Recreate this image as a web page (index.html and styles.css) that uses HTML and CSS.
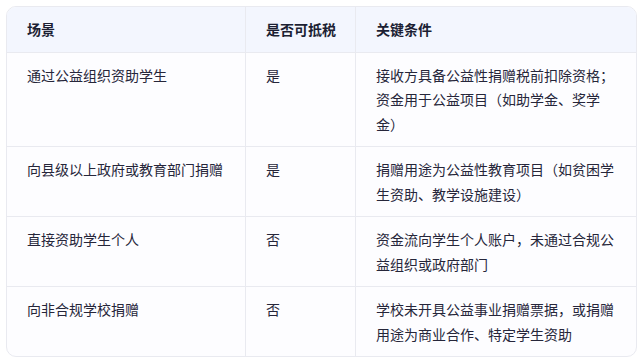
FILE: index.html
```html
<!DOCTYPE html>
<html lang="zh">
<head>
<meta charset="utf-8">
<link rel="stylesheet" href="styles.css">
</head>
<body>
<div class="wrap">
<table class="tbl">
<colgroup><col class="c1"><col class="c2"><col class="c3"></colgroup>
<thead>
<tr><th>场景</th><th>是否可抵税</th><th>关键条件</th></tr>
</thead>
<tbody>
<tr><td>通过公益组织资助学生</td><td>是</td><td>接收方具备公益性捐赠税前扣除资格；资金用于公益项目（如助学金、奖学金）</td></tr>
<tr><td>向县级以上政府或教育部门捐赠</td><td>是</td><td>捐赠用途为公益性教育项目（如贫困学生资助、教学设施建设）</td></tr>
<tr><td>直接资助学生个人</td><td>否</td><td>资金流向学生个人账户，未通过合规公益组织或政府部门</td></tr>
<tr><td>向非合规学校捐赠</td><td>否</td><td>学校未开具公益事业捐赠票据，或捐赠用途为商业合作、特定学生资助</td></tr>
</tbody>
</table>
</div>
</body>
</html>
```
FILE: styles.css
```css
html, body {
  margin: 0;
  background: #ffffff;
}
body {
  font-family: "Noto Sans CJK SC", "Noto Sans", sans-serif;
  color: #26263a;
  text-spacing-trim: space-all;
}
.wrap {
  padding: 6px 5px 0 6px;
}
.tbl {
  width: 631px;
  border-collapse: separate;
  border-spacing: 0;
  border: 1px solid #e9eaf0;
  border-radius: 10px;
  overflow: hidden;
  table-layout: fixed;
  font-size: 14px;
  line-height: 24.5px;
  background: #fdfdff;
}
.c1 { width: 238px; }
.c2 { width: 110px; }
.c3 { width: auto; }
th, td {
  text-align: left;
  vertical-align: top;
  padding: 10px 16px 10px 20px;
  border-left: 1px solid #e9eaf0;
  border-bottom: 1px solid #e9eaf0;
}
th:first-child, td:first-child { border-left: none; }
tbody tr:last-child td { border-bottom: none; }
th {
  background: #f3f6fe;
  font-weight: 700;
  color: #1c1f33;
}
```
